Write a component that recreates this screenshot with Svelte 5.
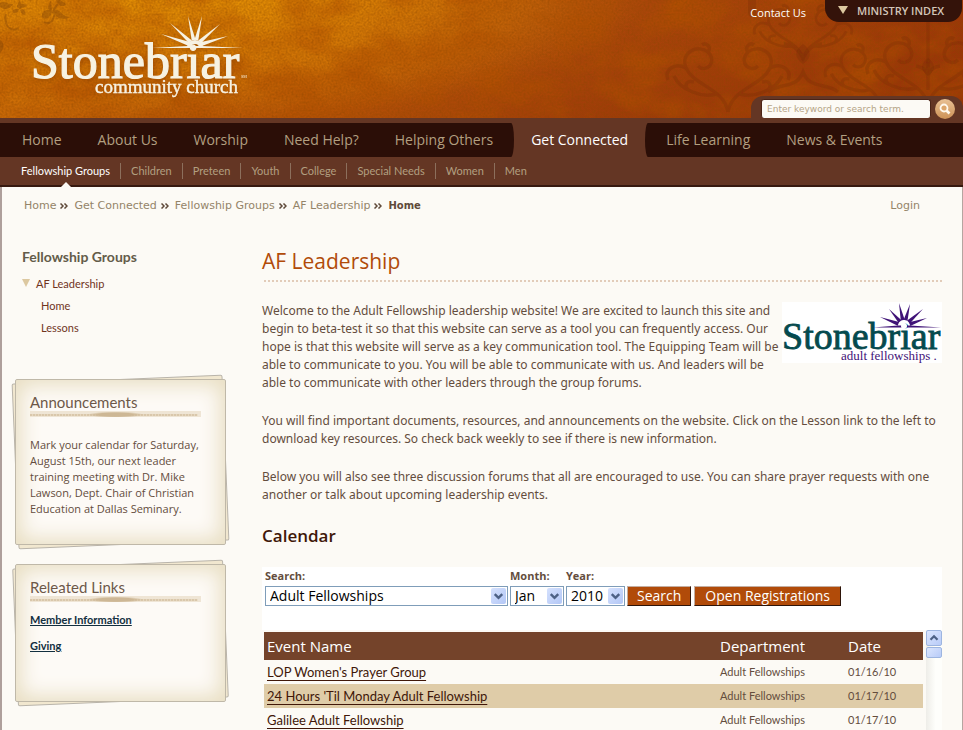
<script>
  const nav = ['Home', 'About Us', 'Worship', 'Need Help?', 'Helping Others', 'Get Connected', 'Life Learning', 'News & Events'];
  const sub = ['Fellowship Groups', 'Children', 'Preteen', 'Youth', 'College', 'Special Needs', 'Women', 'Men'];
  const crumbs = ['Home', 'Get Connected', 'Fellowship Groups', 'AF Leadership'];
  const events = [
    ["LOP Women's Prayer Group", '01/16/10'],
    ["24 Hours 'Til Monday Adult Fellowship", '01/17/10'],
    ['Galilee Adult Fellowship', '01/17/10']
  ];

  // A thin triangle that narrows towards the outer end of the ray.
  function ray([x, y], cx, cy) {
    const a = Math.atan2(cy - y, cx - x);
    const dx = Math.sin(a) * 2;
    const dy = -Math.cos(a) * 2;
    const ex = cx - Math.cos(a) * 6;
    const ey = cy - Math.sin(a) * 6;
    return `${x},${y} ${ex + dx},${ey + dy} ${ex - dx},${ey - dy}`;
  }
  const headRays = [[161, 34], [170, 23], [188, 16], [202, 16], [220, 24], [228, 36]];
  const smallRays = [[98, 15], [107, 7], [117, 1], [128, 2], [141, 7], [145, 16]];
</script>

{#snippet chevron(up)}
  <svg viewBox="0 0 16 16" width="16" height="16" aria-hidden="true">
    <path d={up ? 'M4 10 8 6l4 4' : 'M4 6 8 10 12 6'} fill="none" stroke="#4d6185" stroke-width="2.600" />
  </svg>
{/snippet}

{#snippet swirl(x, y, s, flip)}
  <g transform="translate({x} {y}) scale({flip ? -s : s} {s})">
    <path d="M0 60C4 36 34 34 42 16 48 0 30-8 20 0 10 10 22 22 30 14M12 42C26 46 48 38 54 24M42 16C54 10 64 18 60 28M20 0c-4-5 2-10 6-7M34 30c8-2 10 4 6 8" />
  </g>
{/snippet}

<div class="page">
  <header>
    <svg class="texture" width="100%" height="118" aria-hidden="true">
      <defs>
        <filter id="grain" x="0" y="0" width="100%" height="100%">
          <feTurbulence type="fractalNoise" baseFrequency="0.5" numOctaves="3" seed="4" />
          <feColorMatrix values="0 0 0 0 0.25  0 0 0 0 0.06  0 0 0 0 0  0.7 0.4 0 0 -0.4" />
        </filter>
        <filter id="cloud" x="0" y="0" width="100%" height="100%">
          <feTurbulence type="fractalNoise" baseFrequency="0.018 0.03" numOctaves="4" seed="9" />
          <feColorMatrix values="0 0 0 0 0.45  0 0 0 0 0.08  0 0 0 0 0  1.6 0 0 0 -0.6" />
        </filter>
      </defs>
      <rect width="100%" height="118" filter="url(#cloud)" />
      <g fill="none" stroke="#6d2506" stroke-width="3.500" opacity="0.25">
        {@render swirl(728, 52, 1, false)}
        {@render swirl(728, 52, 1, true)}
        {@render swirl(803, 12, 0.8, true)}
        {@render swirl(803, 12, 0.8, false)}
        {@render swirl(880, 52, 0.9, true)}
        {@render swirl(928, 46, 1, false)}
        {@render swirl(928, 46, 1, true)}
        <path d="M768 92C780 82 796 90 803 72 810 90 826 82 838 92M784 44q12 0 19 14 7-14 19-14M928 20v70M916 66q12 2 12 12 0-10 12-12" />
      </g>
      <g fill="#6d2506" opacity="0.25">
        <path d="M803 44c9 7 9 13 0 20-9-7-9-13 0-20zM928 58c8 6 8 12 0 18-8-6-8-12 0-18zM748 0h8v14c-4 6-8 2-8-2z" />
      </g>
      <g fill="#8a4a08" opacity="0.45">
        <path d="M20 0c-5 7 0 10 2 7zM27 6c-8-6-14 0-7 3zM19 9c-8-2-9 7-1 3zM20 10c2 7 9 6 3-1zM51 1c-6 7-2 10 1 9zM52 10c-10-2-13 6-7 9 5-1 7-5 7-9zM53 10c8-2 9 7 17 7-6 4-15 2-17-7zM56 0c2 6 8 8 10 4L60 0zM0 3c4-3 8 2 13 1-3 6-9 6-13 3zM0 40c5 3 4 9 0 13z" />
        <path d="M6 14c-3 12 6 19 12 14M44 22c7 4 12-4 10-14M58 4c-3 3-5 6-5 9" fill="none" stroke="#8a4a08" stroke-width="2" />
      </g>
      <rect width="100%" height="118" filter="url(#grain)" />
    </svg>

    <a class="logo" href="#home" aria-label="Stonebriar community church">
      <svg viewBox="0 0 260 110" width="260" height="110">
        <g fill="#f7f2e2">
          <text x="31" y="78" font-size="50" stroke="#f7f2e2" stroke-width="1.200">Stonebriar</text>
          <text x="95" y="93" font-size="19" stroke="#f7f2e2" stroke-width="0.400">community church</text>
          <path d="M152 48 188 46h14l41 2z" />
          {#each headRays as r}<polygon points={ray(r, 195, 46)} />{/each}
          <path d="M187 48a8 8 0 0 1 16 0h-4a4 4 0 0 0-8 0z" />
          <text x="241" y="78" font-size="4">SM</text>
        </g>
      </svg>
    </a>

    <div class="tools">
      <div class="top">
        <a class="contact" href="#contact">Contact Us</a>
        <button class="index"><span class="tri"></span>MINISTRY INDEX</button>
      </div>
      <form class="find" onsubmit={(e) => e.preventDefault()}>
        <input type="text" aria-label="Site search" placeholder="Enter keyword or search term." />
        <button aria-label="Go">
          <svg viewBox="0 0 20 20" width="20" height="20">
            <circle cx="9" cy="9" r="3.500" fill="#dda66b" stroke="#fff8ec" stroke-width="1.800" />
            <path d="m11.500 11.500 3 3" stroke="#fff8ec" stroke-width="2.600" />
          </svg>
        </button>
      </form>
    </div>
  </header>

  <nav class="main" aria-label="Main">
    {#each nav as item}
      <a href="#nav" class:active={item === 'Get Connected'}>{item}</a>
    {/each}
  </nav>
  <nav class="sub" aria-label="Section">
    {#each sub as item, i}
      <a href="#sub" class:active={i === 0}>{item}</a>
    {/each}
  </nav>

  <div class="sheet">
    <div class="crumbs">
      <div class="trail">
        {#each crumbs as c}
          <a href="#crumb">{c}</a>
          <svg viewBox="0 0 8 6" width="8" height="6" aria-hidden="true">
            <path d="m.5.5 2.500 2.500L.5 5.500M4.500.5 7 3 4.500 5.500" fill="none" stroke="#5f4a3a" stroke-width="1.500" />
          </svg>
        {/each}
        <strong>Home</strong>
      </div>
      <a href="#login">Login</a>
    </div>

    <div class="columns">
      <aside>
        <h2>Fellowship Groups</h2>
        <ul>
          <li><span class="tri"></span><a href="#af">AF Leadership</a></li>
          <li class="child"><a href="#h">Home</a></li>
          <li class="child"><a href="#l">Lessons</a></li>
        </ul>

        <section class="paper">
          <div class="face tall">
            <h3>Announcements</h3>
            <div class="rule"></div>
            <p>Mark your calendar for Saturday,<br />August 15th, our next leader<br />training meeting with Dr. Mike<br />Lawson, Dept. Chair of Christian<br />Education at Dallas Seminary.</p>
          </div>
        </section>
        <section class="paper">
          <div class="face">
            <h3>Releated Links</h3>
            <div class="rule"></div>
            <div class="links">
              <a href="#m">Member Information</a>
              <a href="#g">Giving</a>
            </div>
          </div>
        </section>
      </aside>

      <main>
        <h1>AF Leadership</h1>
        <div class="dots"></div>
        <article>
          <svg class="badge" viewBox="0 0 160 61" width="160" height="61" role="img" aria-label="Stonebriar adult fellowships">
            <rect width="160" height="61" fill="#fff" />
            <text x="0" y="47" font-size="38" fill="#054a4e" stroke="#054a4e" stroke-width="0.800">Stonebriar</text>
            <g fill="#3f1277">
              <path d="M91 25.500 116 23.500h12l31 2z" />
              {#each smallRays as r}<polygon points={ray(r, 122, 24)} />{/each}
              <circle cx="122" cy="24" r="3" fill="#fff" />
              <text x="59" y="58" font-size="13">adult fellowships .</text>
            </g>
          </svg>
          <p>Welcome to the Adult Fellowship leadership website! We are excited to launch this site and<br />begin to beta-test it so that this website can serve as a tool you can frequently access. Our<br />hope is that this website will serve as a key communication tool. The Equipping Team will be<br />able to communicate to you. You will be able to communicate with us. And leaders will be<br />able to communicate with other leaders through the group forums.</p>
          <p>You will find important documents, resources, and announcements on the website. Click on the Lesson link to the left to<br />download key resources. So check back weekly to see if there is new information.</p>
          <p>Below you will also see three discussion forums that all are encouraged to use. You can share prayer requests with one<br />another or talk about upcoming leadership events.</p>
        </article>

        <h2>Calendar</h2>
        <form class="filter" onsubmit={(e) => e.preventDefault()}>
          <div class="field wide">
            <label for="dept">Search:</label>
            <div class="pick">
              <select id="dept"><option>Adult Fellowships</option></select>
              <span class="arrow">{@render chevron(false)}</span>
            </div>
          </div>
          <div class="field month">
            <label for="month">Month:</label>
            <div class="pick">
              <select id="month"><option>Jan</option></select>
              <span class="arrow">{@render chevron(false)}</span>
            </div>
          </div>
          <div class="field year">
            <label for="year">Year:</label>
            <div class="pick">
              <select id="year"><option>2010</option></select>
              <span class="arrow">{@render chevron(false)}</span>
            </div>
          </div>
          <button>Search</button>
          <button>Open Registrations</button>
        </form>

        <div class="events">
          <table>
            <thead>
              <tr><th class="name">Event Name</th><th class="dept">Department</th><th class="date">Date</th></tr>
            </thead>
            <tbody>
              {#each events as [name, date]}
                <tr><td><a href="#event">{name}</a></td><td>Adult Fellowships</td><td>{date}</td></tr>
              {/each}
            </tbody>
          </table>
          <div class="bar">
            <button aria-label="Scroll up">{@render chevron(true)}</button>
            <div class="thumb"></div>
          </div>
        </div>
      </main>
    </div>
  </div>
</div>

<style>
  :global(body) { margin: 0; background: #fcfaf5; }
  .page {
    height: 100vh;
    display: flex;
    flex-direction: column;
    overflow: hidden;
    font-family: Lato, "Open Sans", sans-serif;
    font-size: 11px;
    color: #644d3d;
  }
  a { color: inherit; text-decoration: none; }
  h1, h2, h3, p, ul { margin: 0; padding: 0; font-weight: 400; }
  button { cursor: pointer; font-family: inherit; }

  header {
    position: relative;
    flex: none;
    height: 118px;
    display: flex;
    justify-content: space-between;
    background:
      radial-gradient(ellipse 460px 130px at 190px -10px, #e69304 0%, #e6930400 100%),
      linear-gradient(172deg, #c8680600 40%, #8f2c0699 100%),
      linear-gradient(95deg, #cc6c06 0%, #c05c06 35%, #ac480a 60%, #a03a08 100%);
  }
  .texture { position: absolute; left: 0; top: 0; }
  .logo { position: relative; }
  .logo svg { display: block; overflow: visible; filter: drop-shadow(1px 2px 2px #7a300066); }
  .logo text, .badge text { font-family: "Liberation Serif", serif; }
  .tools { position: relative; display: flex; flex-direction: column; justify-content: space-between; align-items: flex-end; }
  .top { display: flex; align-items: flex-start; gap: 19px; padding-right: 1px; }
  .contact { color: #fff; font: 11px/26px "Open Sans", sans-serif; }
  .index {
    display: flex;
    align-items: center;
    gap: 9px;
    width: 137px;
    height: 22px;
    padding: 0 0 2px 13px;
    border: 0;
    border-radius: 0 0 14px 14px;
    background: #34130a;
    color: #d3c5b9;
    font: 600 11px "Open Sans", sans-serif;
    white-space: nowrap;
  }
  .tri { flex: none; border: 5px solid transparent; border-top: 8px solid #dcc8a0; border-bottom: 0; }
  .find {
    display: flex;
    gap: 4px;
    height: 22px;
    box-sizing: border-box;
    padding: 3px 8px 0 10px;
    border-radius: 12px 12px 0 0;
    background: #643624;
  }
  .find input {
    width: 170px;
    height: 19px;
    box-sizing: border-box;
    border: 1px solid #4c2416;
    border-bottom: 0;
    border-radius: 3px;
    padding: 0 5px;
    background: #fcfaf5;
    font: 9px "DejaVu Sans", sans-serif;
    color: #6b4a35;
  }
  .find input::placeholder { color: #b5a486; opacity: 1; }
  .find button {
    width: 20px;
    height: 20px;
    padding: 0;
    border: 0;
    border-radius: 50%;
    background: linear-gradient(#e9c194, #cd9256);
  }
  .find svg { display: block; }

  .main {
    flex: none;
    display: flex;
    height: 34px;
    border-top: 5px solid #643624;
    padding-left: 4px;
    background: #2b0e07;
    font: 14px/34px "Open Sans", sans-serif;
    color: #b29f80;
    white-space: nowrap;
  }
  .main a { padding: 0 18px; }
  .main .active { position: relative; padding: 0 20px; background: #643624; color: #fff; }
  .main .active::before, .main .active::after {
    content: "";
    position: absolute;
    top: 0;
    left: 0;
    width: 3px;
    height: 34px;
    background: #2b0e07;
    border-radius: 0 3px 3px 0 / 0 17px 17px 0;
  }
  .main .active::after { left: auto; right: 0; border-radius: 3px 0 0 3px / 17px 0 0 17px; }
  .sub {
    flex: none;
    display: flex;
    align-items: center;
    height: 28px;
    padding-left: 11px;
    background: #643624;
    border-bottom: 2px solid #36190f;
    color: #b29f80;
    white-space: nowrap;
  }
  .sub a { position: relative; padding: 0 10px; line-height: 16px; }
  .sub a + a { border-left: 1px solid #8c6f5c; }
  .sub .active { color: #fff; }
  .sub .active::after {
    content: "";
    position: absolute;
    left: 50%;
    top: 19px;
    margin-left: -5px;
    border: 5px solid transparent;
    border-top: 0;
    border-bottom-color: #fcfaf5;
  }

  .sheet {
    flex: 1;
    min-height: 0;
    display: flex;
    flex-direction: column;
    border-left: 2px solid #ae9f9b;
    border-right: 1px solid #b5a5a0;
    background: #fcfaf5;
  }
  .crumbs {
    display: flex;
    justify-content: space-between;
    padding: 10px 42px 0 22px;
    font: 11px/18px "DejaVu Sans", sans-serif;
    color: #948468;
  }
  .trail { display: flex; align-items: center; gap: 4px; }
  .trail svg { margin-right: 2px; }
  .trail strong { font-size: 10px; color: #5f4a3a; }

  .columns { flex: 1; min-height: 0; display: flex; }
  aside { flex: none; width: 260px; box-sizing: border-box; padding: 32px 34px 0 12px; }
  aside h2 { padding-left: 8px; font: 700 14px/20px Lato, sans-serif; color: #635c49; }
  aside ul { list-style: none; padding: 5px 0 41px 8px; color: #70341d; }
  aside li { display: flex; align-items: center; gap: 6px; height: 22px; }
  aside .child { padding-left: 19px; }
  aside li .tri { border-left-width: 4px; border-right-width: 4px; }

  .paper { position: relative; margin: 0 0 19px 1px; width: 211px; }
  .paper::before {
    content: "";
    position: absolute;
    inset: 0;
    border: 1px solid #b9b4aa;
    background: #f1e7cf;
    border-radius: 2px;
    transform: rotate(-2.400deg);
  }
  .face {
    position: relative;
    height: 138px;
    box-sizing: border-box;
    padding: 13px 14px;
    border: 1px solid #bfb8a8;
    border-radius: 2px;
    background: #fdfaf6;
    box-shadow: inset 0 0 20px 5px #e8dec2;
  }
  .tall { height: 166px; }
  h3 { font-size: 15px; line-height: 18px; color: #6d5849; }
  .rule {
    width: 171px;
    height: 6px;
    margin-bottom: 20px;
    background:
      radial-gradient(ellipse 28px 3px at 50% 60%, #cdb795 60%, transparent),
      repeating-linear-gradient(90deg, #d9c7ab 0 2px, #e5d7c0 2px 3px) 0 3px / 98% 2px no-repeat,
      #efe5d5;
  }
  .face p { font: 11px/16px "Open Sans", sans-serif; white-space: nowrap; }
  .links { display: flex; flex-direction: column; gap: 10px; margin-top: -10px; }
  .links a { line-height: 16px; font-weight: 700; color: #122f3f; text-decoration: underline; }

  main { flex: 1; min-width: 0; display: flex; flex-direction: column; padding: 32px 20px 0 0; }
  h1 { font: 21px/28px "Open Sans", sans-serif; color: #b14b09; }
  .dots { height: 2px; margin: 5px 0 20px 2px; background: repeating-linear-gradient(90deg, #e2ccb9 0 2px, transparent 2px 4px); }
  article { font: 12px/18px "Noto Sans", sans-serif; white-space: nowrap; }
  article p { margin-bottom: 20px; }
  .badge { float: right; }
  main h2 { margin-top: 1px; font: 600 17px/22px "Open Sans", sans-serif; color: #401708; }

  .filter {
    display: flex;
    align-items: flex-end;
    gap: 2px;
    height: 63px;
    box-sizing: border-box;
    margin-top: 20px;
    padding: 0 3px 24px;
    background: #fff;
  }
  .filter label { display: block; font: 700 11px/14px "Open Sans", sans-serif; margin-bottom: 3px; }
  .wide { width: 243px; }
  .month { width: 54px; }
  .year { width: 59px; }
  .pick { position: relative; }
  select {
    appearance: none;
    display: block;
    width: 100%;
    height: 20px;
    padding: 0 4px;
    border: 1px solid #7f9db9;
    border-radius: 0;
    background: #fff;
    color: #000;
    font: 14px/18px "Open Sans", sans-serif;
  }
  .arrow {
    position: absolute;
    top: 2px;
    right: 2px;
    width: 15px;
    height: 16px;
    border-radius: 2px;
    background: linear-gradient(135deg, #d5e1fd, #b3c7f6);
    pointer-events: none;
  }
  .arrow svg { display: block; width: 15px; }
  .filter button {
    height: 20px;
    padding: 0 10px;
    border: 1px solid;
    border-color: #c3aea2 #2d1409 #2d1409 #c3aea2;
    background: #b14b09;
    color: #fff;
    font: 14px/18px "Open Sans", sans-serif;
    white-space: nowrap;
  }
  .filter button:first-of-type { padding: 0 9px; margin-right: 1px; }

  .events { flex: 1; min-height: 0; display: flex; gap: 3px; padding-left: 2px; overflow: hidden; }
  table { flex: 1; align-self: flex-start; margin-top: 2px; border-collapse: collapse; table-layout: fixed; }
  th { height: 28px; padding: 0 3px; background: #74432a; color: #fff; text-align: left; font: 15px/28px "Open Sans", sans-serif; }
  td { height: 24px; padding: 0 3px; line-height: 16px; }
  .dept { width: 122px; }
  .date { width: 72px; }
  td a { font-size: 13px; color: #401708; text-decoration: underline; text-underline-offset: 3px; text-decoration-skip-ink: none; }
  tbody tr:nth-child(even) { background: #dfcca8; }
  .bar { flex: none; width: 16px; background: linear-gradient(90deg, #eeede8, #fefefb 60%); }
  .bar button, .thumb {
    display: block;
    width: 16px;
    height: 16px;
    box-sizing: border-box;
    padding: 0;
    border: 1px solid #9db5e0;
    border-radius: 2px;
    background: linear-gradient(135deg, #dbe6fe, #b8cbf8);
  }
  .bar svg { display: block; width: 14px; height: 14px; }
  .thumb { height: 11px; margin-top: 1px; }
</style>
